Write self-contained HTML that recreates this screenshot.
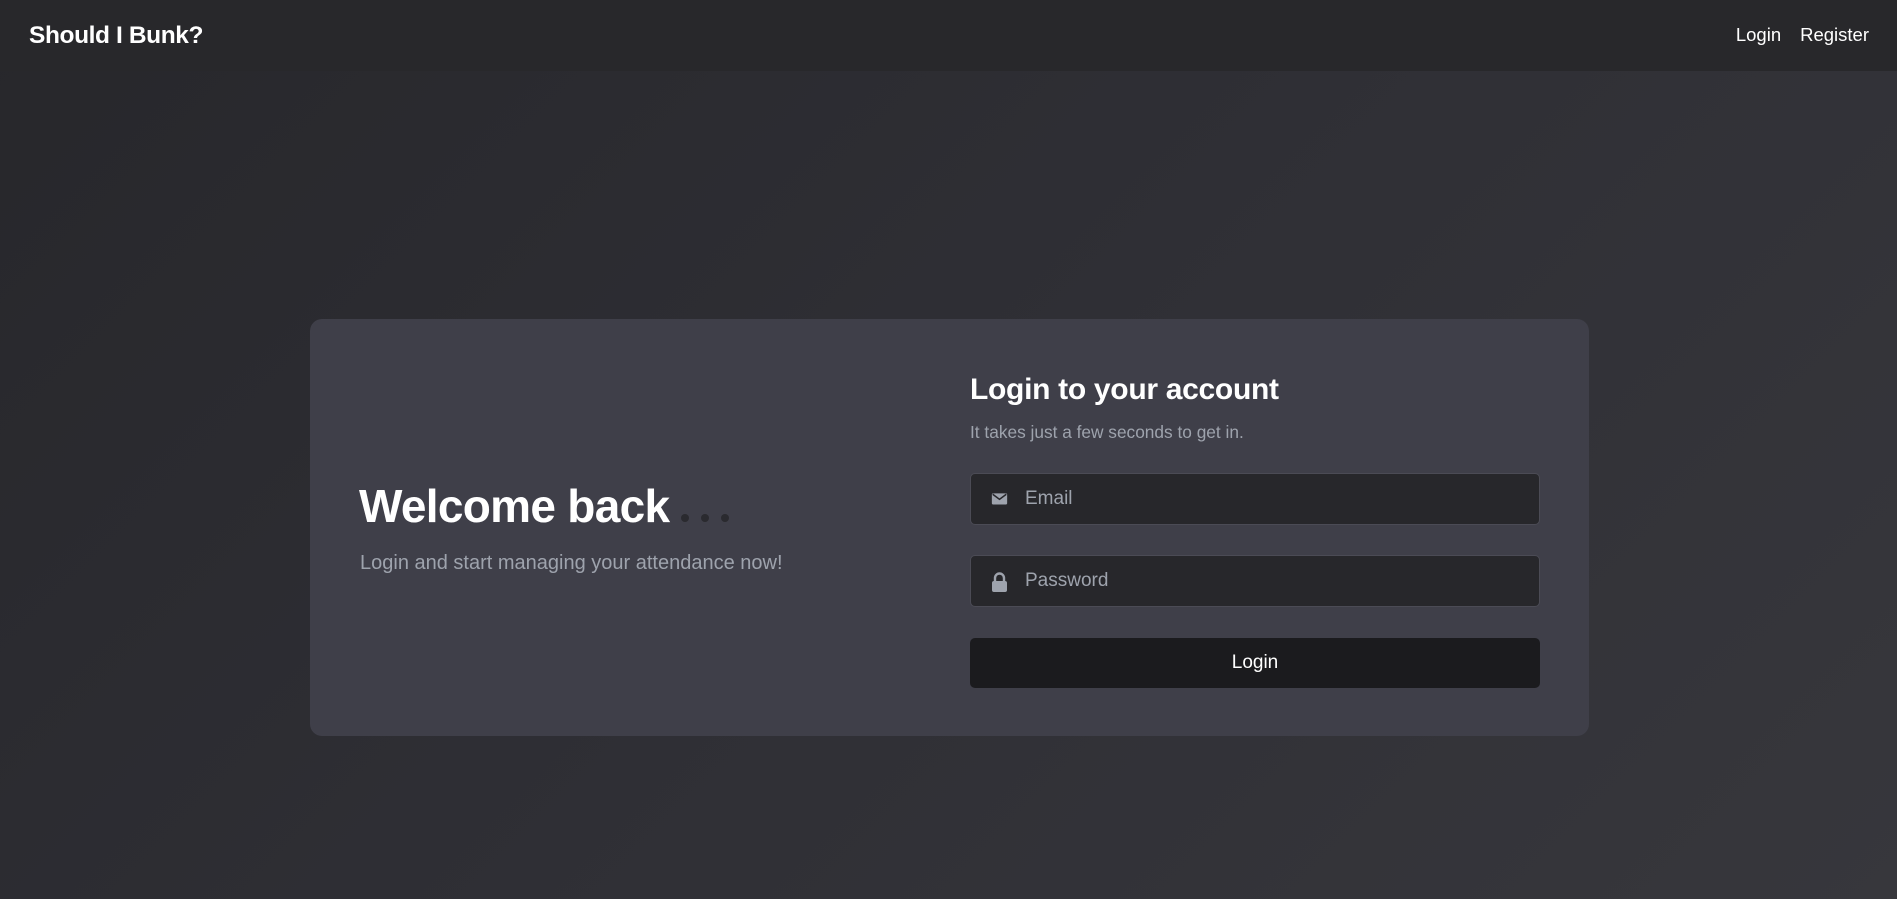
<!DOCTYPE html>
<html><head><meta charset="utf-8"><style>
*{box-sizing:border-box;margin:0;padding:0}
html,body{width:1897px;height:899px;overflow:hidden}
body{font-family:"Liberation Sans",sans-serif;background:linear-gradient(135deg,#27272b 0%,#2f2f35 50%,#37373c 100%);color:#fff;position:relative}
.hdr{position:absolute;left:0;top:0;width:1897px;height:71px;background:#28282b}
.brand{position:absolute;left:29px;top:22px;font-size:24.5px;font-weight:bold;letter-spacing:-0.4px}
.nav{position:absolute;right:28px;top:24px;font-size:18.5px}
.nav span{margin-left:19px}
.card{position:absolute;left:310px;top:319px;width:1279px;height:417px;background:#3f3f49;border-radius:12px}
.wb{position:absolute;left:49px;top:160px;font-size:46px;font-weight:bold;letter-spacing:-0.7px;white-space:nowrap}
.dots{display:inline-block;margin-left:12px}
.dots i{display:inline-block;width:8px;height:8px;border-radius:50%;background:#2a2a2f;margin-right:12px}
.ls{position:absolute;left:50px;top:233px;font-size:20px;color:#9ea3ad}
.h2{position:absolute;left:660px;top:54px;font-size:30px;font-weight:bold;letter-spacing:-0.3px}
.sub{position:absolute;left:660px;top:103px;font-size:17.3px;color:#9ea3ad}
.inp{position:absolute;left:660px;width:570px;height:52px;background:#27272b;border:1px solid #4b4b55;border-radius:5px}
.inp svg{position:absolute;left:20px;top:16px}
.inp span{position:absolute;left:54px;top:14px;font-size:19px;color:#9ea3ad}
.btn{position:absolute;left:660px;top:319px;width:570px;height:50px;background:#1b1b1e;border-radius:5px;text-align:center;line-height:50px;font-size:19px}
</style></head><body>
<div class="hdr"><div class="brand">Should I Bunk?</div><div class="nav"><span>Login</span><span>Register</span></div></div>
<div class="card">
<div class="wb">Welcome back<span class="dots"><i></i><i></i><i></i></span></div>
<div class="ls">Login and start managing your attendance now!</div>
<div class="h2">Login to your account</div>
<div class="sub">It takes just a few seconds to get in.</div>
<div class="inp" style="top:154px"><svg width="17" height="17" viewBox="0 0 20 20"><rect x="1" y="4" width="18" height="13" rx="1.5" fill="#9ea3ad"/><path d="M2 5l8 6 8-6" stroke="#27272b" stroke-width="1.8" fill="none"/></svg><span>Email</span></div>
<div class="inp" style="top:236px"><svg width="17" height="20" viewBox="0 0 17 20"><path d="M4 9V6a4.5 4.5 0 0 1 9 0v3" stroke="#9ea3ad" stroke-width="2.4" fill="none"/><rect x="1" y="9" width="15" height="11" rx="2" fill="#9ea3ad"/></svg><span>Password</span></div>
<div class="btn">Login</div>
</div>
</body></html>
